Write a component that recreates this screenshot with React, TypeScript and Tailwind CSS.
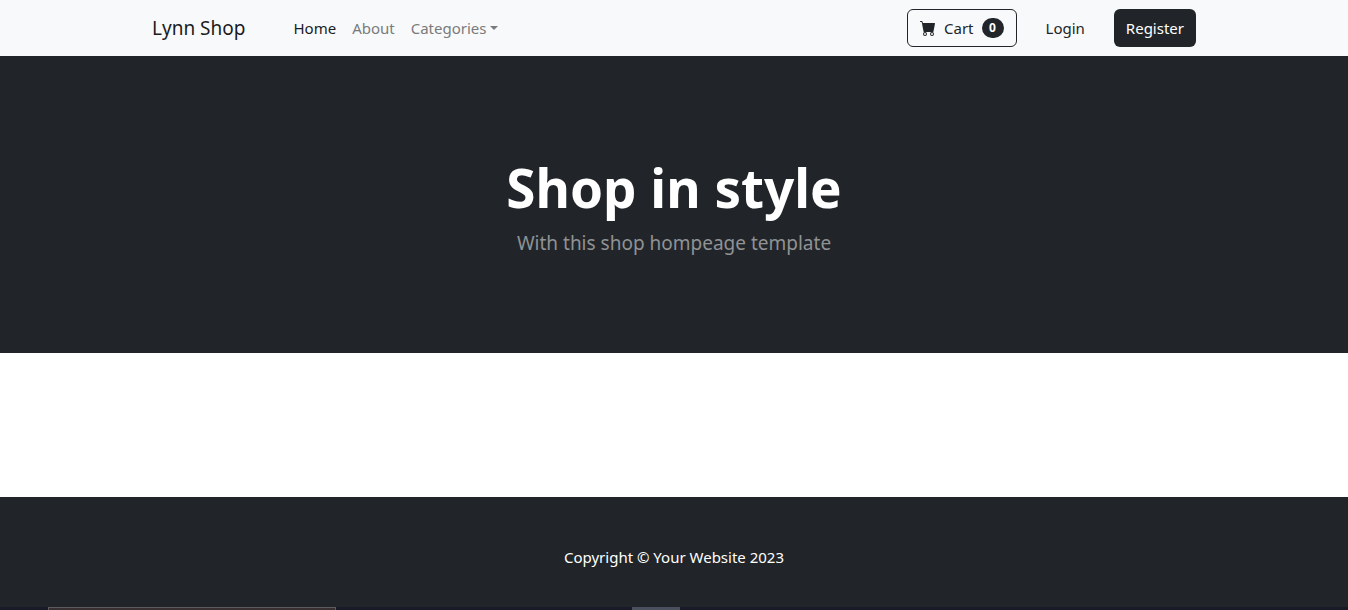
import { BsCartFill } from "react-icons/bs";

const navLinks = [
  { label: "Home", active: true },
  { label: "About", active: false },
];

function Navbar() {
  return (
    <nav className="bg-[#f8f9fa] text-[#212529]">
      <div className="mx-auto flex h-14 max-w-[1140px] items-center px-12">
        <a href="#" className="text-[19px] leading-[30px] text-[#1a1c1e]">
          Lynn Shop
        </a>
        <ul className="ml-10 flex items-center">
          {navLinks.map((link) => (
            <li key={link.label}>
              <a href="#" className={link.active ? "px-2 text-[#1a1c1e]" : "px-2 text-[#7a7b7c]"}>
                {link.label}
              </a>
            </li>
          ))}
          <li className="flex">
            <button type="button" aria-haspopup="menu" className="flex items-center gap-1 px-2 text-[#7a7b7c]">
              Categories
              <svg viewBox="0 0 8 4" className="h-1 w-2" fill="currentColor" aria-hidden="true">
                <path d="M0 0h8L4 4z" />
              </svg>
            </button>
          </li>
        </ul>
        <div className="ml-auto flex items-center gap-4">
          <button
            type="button"
            className="flex h-[38px] items-center rounded-md border border-[#212529] px-3"
          >
            <BsCartFill className="mr-2 size-4" aria-hidden="true" />
            Cart
            <span className="ml-2 flex h-5 w-[22px] items-center justify-center rounded-full bg-[#212529] text-xs font-bold text-white">
              0
            </span>
          </button>
          <a href="#" className="flex h-[38px] items-center px-[13px]">
            Login
          </a>
          <a href="#" className="flex h-[38px] items-center rounded-md bg-[#212529] px-3 text-white">
            Register
          </a>
        </div>
      </div>
    </nav>
  );
}

function Taskbar() {
  return (
    <div className="flex h-[3px] bg-[#1a1928]" aria-hidden="true">
      <div className="ml-12 w-72 border border-b-0 border-[#5c5c5e] bg-[#372f32]" />
      <div className="ml-[296px] w-12 bg-[#4a5060]" />
    </div>
  );
}

export default function App() {
  return (
    <div className="bg-white font-['Noto_Sans','Open_Sans',sans-serif] text-[15px] leading-6">
      <Navbar />
      <header className="bg-[#212529] pt-[98px] pb-24 text-center">
        <h1 className="text-[53px] leading-[67px] font-bold text-white">Shop in style</h1>
        <p className="mt-2 text-[19px] leading-7 text-[#909294]">With this shop hompeage template</p>
      </header>
      <main className="h-36" />
      <footer className="bg-[#212529] pt-12 pb-[38px] text-center text-white">
        <p>Copyright © Your Website 2023</p>
      </footer>
      <Taskbar />
    </div>
  );
}
